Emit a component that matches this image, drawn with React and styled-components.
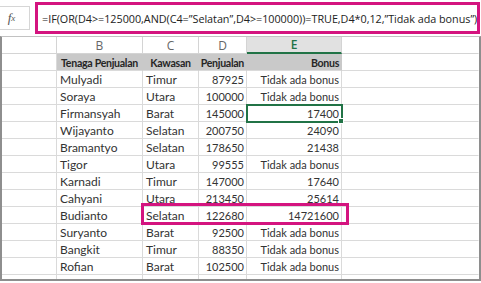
import React from 'react'
import styled, { createGlobalStyle } from 'styled-components'

const GlobalStyle = createGlobalStyle`
  html, body {
    margin: 0;
    padding: 0;
    background: #fff;
  }
  body {
    font-family: Lato, "Open Sans", sans-serif;
  }
`

const Frame = styled.div`
  width: 481px;
  height: 283px;
  display: flex;
  flex-direction: column;
  overflow: hidden;
  background: #fff;
`

const FormulaBar = styled.div`
  height: 36px;
  display: flex;
  align-items: center;
  gap: 5px;
  padding-right: 1px;
  box-sizing: border-box;
`

const FxButton = styled.div`
  width: 30px;
  height: 24px;
  box-sizing: border-box;
  border: 1px solid #d6d6d6;
  border-left: none;
  display: flex;
  align-items: center;
  justify-content: center;
  padding-right: 6px;
  font-family: "Liberation Serif", serif;
  font-style: italic;
  font-size: 13px;
  color: #555;

  sub {
    font-size: 9px;
    vertical-align: -1px;
  }
`

const FormulaInput = styled.div`
  flex: 1;
  height: 32px;
  box-sizing: border-box;
  border: 3px solid #d4147f;
  display: flex;
  align-items: center;
  padding-left: 4px;
  font-family: "Open Sans", sans-serif;
  font-size: 10.8px;
  letter-spacing: -0.03px;
  color: #222;
  white-space: nowrap;
  overflow: hidden;
`

const Sheet = styled.div`
  height: 245px;
  box-sizing: border-box;
  border: 2px solid #8e8e8e;
  border-top: 1px solid #c2c2c2;
  overflow: hidden;
`

const Grid = styled.div`
  position: relative;
  display: grid;
  grid-template-columns: 55px 86px 56px 48px 95px 1fr;
  grid-auto-rows: 17px;
`

const Cell = styled.div`
  position: relative;
  box-sizing: border-box;
  border-right: 1px solid ${p => (p.$last ? 'transparent' : '#dadada')};
  border-bottom: 1px solid #dadada;
  display: flex;
  align-items: center;
  justify-content: ${p => (p.$num ? 'flex-end' : 'flex-start')};
  padding: 1px ${p => (p.$num ? '2px' : '3px')} 0;
  font-size: ${p => (p.$num ? '11px' : '12px')};
  color: #333;
  white-space: nowrap;

  ${p =>
    p.$selected &&
    `
    outline: 2px solid #217346;
    outline-offset: -1px;
    z-index: 1;
    &::after {
      content: '';
      position: absolute;
      right: -3px;
      bottom: -3px;
      width: 4px;
      height: 4px;
      background: #217346;
      border: 1px solid #fff;
    }
  `}
`

const ColLetter = styled.div`
  box-sizing: border-box;
  border-right: 1px solid ${p => (p.$last ? 'transparent' : '#d4d4d4')};
  border-bottom: ${p => (p.$active ? '2px solid #217346' : '1px solid #d4d4d4')};
  background: ${p => (p.$active ? '#e1e1e1' : '#fff')};
  display: flex;
  align-items: center;
  justify-content: center;
  font-family: "Open Sans", sans-serif;
  font-size: 12px;
  font-weight: ${p => (p.$active ? 600 : 400)};
  color: ${p => (p.$active ? '#217346' : '#666')};
`

const HeadCell = styled.div`
  box-sizing: border-box;
  border-right: 1px solid #c9c9c9;
  border-bottom: 1px solid #dadada;
  background: #c9c9c9;
  display: flex;
  align-items: center;
  justify-content: ${p => p.$align};
  padding: 1px 2px 0;
  font-size: 10.6px;
  font-weight: 700;
  letter-spacing: -0.3px;
  color: #262626;
  white-space: nowrap;
`

const Highlight = styled.div`
  position: absolute;
  left: 139px;
  top: 166px;
  width: 208px;
  height: 22px;
  box-sizing: border-box;
  border: 3px solid #d4147f;
  pointer-events: none;
  z-index: 2;
`

const rows = [
  ['Mulyadi', 'Timur', '87925', 'Tidak ada bonus'],
  ['Soraya', 'Utara', '100000', 'Tidak ada bonus'],
  ['Firmansyah', 'Barat', '145000', '17400'],
  ['Wijayanto', 'Selatan', '200750', '24090'],
  ['Bramantyo', 'Selatan', '178650', '21438'],
  ['Tigor', 'Utara', '99555', 'Tidak ada bonus'],
  ['Karnadi', 'Timur', '147000', '17640'],
  ['Cahyani', 'Utara', '213450', '25614'],
  ['Budianto', 'Selatan', '122680', '14721600'],
  ['Suryanto', 'Barat', '92500', 'Tidak ada bonus'],
  ['Bangkit', 'Timur', '88350', 'Tidak ada bonus'],
  ['Rofian', 'Barat', '102500', 'Tidak ada bonus'],
]

const formula =
  '=IF(OR(D4>=125000,AND(C4=\u201dSelatan\u201d,D4>=100000))=TRUE,D4*0,12,\u201dTidak ada bonus\u201d)'

const App = () => {
  return (
    <Frame>
      <GlobalStyle />
      <FormulaBar>
        <FxButton>
          f<sub>x</sub>
        </FxButton>
        <FormulaInput>{formula}</FormulaInput>
      </FormulaBar>
      <Sheet>
        <Grid>
          <ColLetter />
          <ColLetter>B</ColLetter>
          <ColLetter>C</ColLetter>
          <ColLetter>D</ColLetter>
          <ColLetter $active>E</ColLetter>
          <ColLetter $last />

          <Cell />
          <HeadCell $align='center'>Tenaga Penjualan</HeadCell>
          <HeadCell $align='center'>Kawasan</HeadCell>
          <HeadCell $align='flex-end'>Penjualan</HeadCell>
          <HeadCell $align='flex-end'>Bonus</HeadCell>
          <Cell $last />

          {rows.map((r, i) => (
            <React.Fragment key={r[0]}>
              <Cell />
              <Cell>{r[0]}</Cell>
              <Cell>{r[1]}</Cell>
              <Cell $num>{r[2]}</Cell>
              <Cell $num $selected={i === 2}>
                {r[3]}
              </Cell>
              <Cell $last />
            </React.Fragment>
          ))}

          <Cell />
          <Cell />
          <Cell />
          <Cell />
          <Cell />
          <Cell $last />

          <Highlight />
        </Grid>
      </Sheet>
    </Frame>
  )
}

export default App
